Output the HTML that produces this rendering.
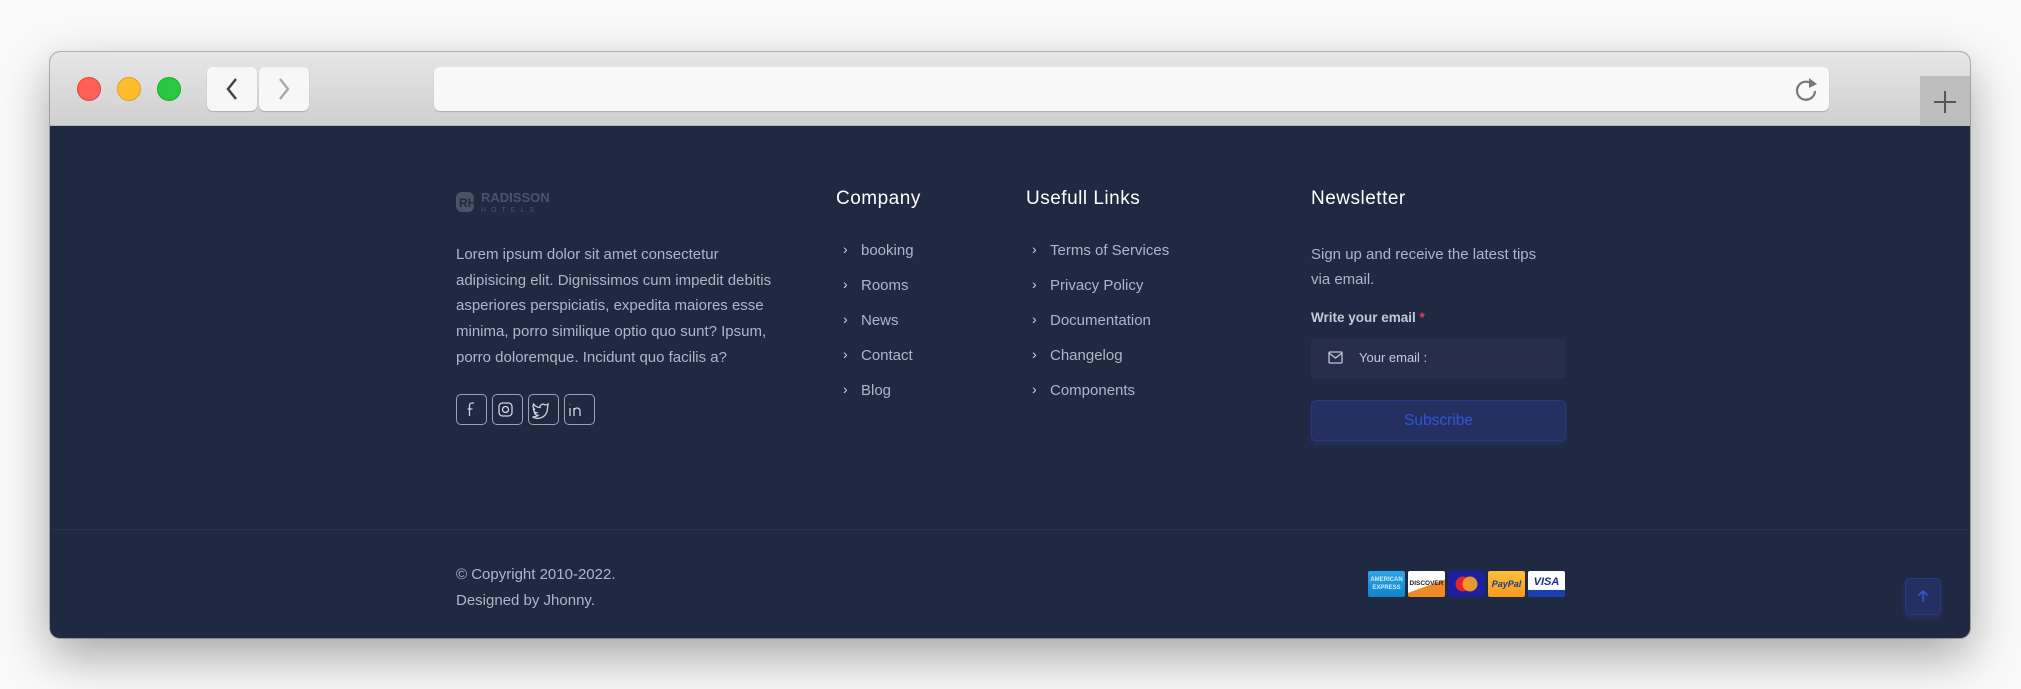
<!DOCTYPE html>
<html><head><meta charset="utf-8"><style>
*{margin:0;padding:0;box-sizing:border-box}
body{width:2021px;height:689px;background:#fafafa;position:relative;overflow:hidden;font-family:"Liberation Sans",sans-serif}
.win{position:absolute;left:50px;top:52px;width:1920px;height:586px;border-radius:10px;overflow:hidden;background:#202942;box-shadow:0 18px 50px rgba(0,0,0,.35),0 0 0 1px rgba(0,0,0,.25)}
.bar{position:absolute;left:0;top:0;width:1920px;height:74px;background:linear-gradient(#e6e6e6,#d0d0d0);border-bottom:1px solid #b5b5b5}
.dot{position:absolute;top:77px;width:24px;height:24px;border-radius:50%}
.nb{position:absolute;top:67px;width:50px;height:44px;background:#f7f7f7;border-radius:6px;box-shadow:0 1px 1px rgba(0,0,0,.2)}
.abs{position:absolute}
.t{position:absolute;color:#aeb6c6;font-size:15px;white-space:nowrap}
h4{position:absolute;color:#fff;font-weight:normal;font-size:19px;letter-spacing:.5px}
.li{position:absolute;color:#aeb6c6;font-size:15px}
.li b{position:absolute;left:-18px;top:-1px;font-weight:normal;font-size:14px;color:#cfd5df}
.so{position:absolute;top:394px;width:31px;height:31px;border:1px solid #9aa3b3;border-radius:5px}
.card{position:absolute;top:571px;width:37px;height:26px;border-radius:2px;font-size:9px;font-weight:bold;text-align:center;line-height:26px}
</style></head><body>
<div class="win"></div>
<div class="abs" style="left:50px;top:52px;width:1920px;height:74px;border-radius:10px 10px 0 0;overflow:hidden">
<div class="bar"></div>
<div class="abs" style="left:1870px;top:24px;width:50px;height:50px;background:#bdbdbd"></div>
</div>
<div class="dot" style="left:77px;background:#fe5f57;border:1px solid #e0443e"></div>
<div class="dot" style="left:117px;background:#febc2e;border:1px solid #dea123"></div>
<div class="dot" style="left:157px;background:#28c840;border:1px solid #1aab29"></div>
<div class="nb" style="left:207px"></div><div class="nb" style="left:259px"></div>
<svg class="abs" style="left:207px;top:67px" width="102" height="44"><path d="M29 12 L21 22 L29 32" stroke="#444" stroke-width="2.5" fill="none"/><path d="M73 12 L81 22 L73 32" stroke="#aaa" stroke-width="2.5" fill="none"/></svg>
<div class="abs" style="left:434px;top:67px;width:1395px;height:44px;background:#f8f8f8;border-radius:6px;box-shadow:0 1px 1px rgba(0,0,0,.2)"></div>
<svg class="abs" style="left:1792px;top:74px" width="28" height="30"><path d="M20 10 A9 9 0 1 0 23 17" stroke="#777" stroke-width="2.2" fill="none"/><path d="M17 4 L25 10 L17 14 Z" fill="#777"/></svg>
<svg class="abs" style="left:1932px;top:89px" width="26" height="26"><path d="M13 2V24M2 13H24" stroke="#555" stroke-width="2"/></svg>

<svg class="abs" style="left:456px;top:190px" width="104" height="24"><rect x="0" y="2" width="18" height="20" rx="6" fill="#4b5366"/><text x="3" y="17" font-size="12" font-weight="bold" fill="#202942" font-family="Liberation Sans">RH</text><text x="25" y="12" font-size="13" font-weight="bold" fill="#4b5366" font-family="Liberation Sans">RADISSON</text><text x="25" y="22" font-size="7" fill="#4b5366" letter-spacing="5" font-family="Liberation Sans">HOTELS</text></svg>
<div class="t" style="left:456px;top:242px;line-height:25.7px">Lorem ipsum dolor sit amet consectetur<br>adipisicing elit. Dignissimos cum impedit debitis<br>asperiores perspiciatis, expedita maiores esse<br>minima, porro similique optio quo sunt? Ipsum,<br>porro doloremque. Incidunt quo facilis a?</div>
<div class="so" style="left:456px"></div><div class="so" style="left:492px"></div><div class="so" style="left:528px"></div><div class="so" style="left:564px"></div>
<svg class="abs" style="left:456px;top:394px" width="140" height="31" fill="none" stroke="#cfd5df" stroke-width="1.3">
<path d="M18 9h-2a2.5 2.5 0 0 0-2.5 2.5V22M11.5 15h5"/>
<rect x="43" y="9" width="13" height="13" rx="3.5"/><circle cx="49.5" cy="15.5" r="3"/>
<path d="M92 10c-1 .6-2 .9-3 1a3 3 0 0 0-5 2.5C81 13.4 79 12 77.5 10c-1 2-.5 4.5 1.5 5.5-.6 0-1.2-.2-1.5-.4 0 2 1.5 3.3 3 3.7-.7.2-1.3.2-2 .1.5 1.4 2 2.5 3.5 2.5-1.6 1.2-3.6 1.7-5.5 1.5 7 4 15-.5 15-9z"/>
<path d="M114 14v8M114 10.5v.5M118 22v-8M118 17a3 3 0 0 1 6 0v5"/></svg>

<h4 style="left:836px;top:188px">Company</h4>
<div class="li" style="left:861px;top:242px"><b>›</b>booking</div>
<div class="li" style="left:861px;top:277px"><b>›</b>Rooms</div>
<div class="li" style="left:861px;top:312px"><b>›</b>News</div>
<div class="li" style="left:861px;top:347px"><b>›</b>Contact</div>
<div class="li" style="left:861px;top:382px"><b>›</b>Blog</div>

<h4 style="left:1026px;top:188px">Usefull Links</h4>
<div class="li" style="left:1050px;top:242px"><b>›</b>Terms of Services</div>
<div class="li" style="left:1050px;top:277px"><b>›</b>Privacy Policy</div>
<div class="li" style="left:1050px;top:312px"><b>›</b>Documentation</div>
<div class="li" style="left:1050px;top:347px"><b>›</b>Changelog</div>
<div class="li" style="left:1050px;top:382px"><b>›</b>Components</div>

<h4 style="left:1311px;top:188px">Newsletter</h4>
<div class="t" style="left:1311px;top:242px;line-height:25px">Sign up and receive the latest tips<br>via email.</div>
<div class="t" style="left:1311px;top:310px;font-size:13.5px;font-weight:bold;color:#c5cbd6">Write your email <span style="color:#e43f52">*</span></div>
<div class="abs" style="left:1311px;top:338px;width:255px;height:41px;background:#262e4c;border-radius:5px"></div>
<svg class="abs" style="left:1328px;top:351px" width="16" height="14" fill="none" stroke="#bfc6d2" stroke-width="1.3"><rect x="1" y="1" width="13" height="11" rx="1"/><path d="M1 2l6.5 5 6.5-5"/></svg>
<div class="t" style="left:1359px;top:350px;font-size:13px;color:#c5cbd6">Your email :</div>
<div class="abs" style="left:1311px;top:400px;width:255px;height:41px;background:#243062;border:1px solid #2b3a7a;border-radius:5px;box-shadow:0 3px 6px rgba(47,85,212,.25);color:#2f55d4;font-size:15.5px;text-align:center;line-height:39px">Subscribe</div>

<div class="abs" style="left:50px;top:529px;width:1920px;height:1px;background:#283152"></div>
<div class="t" style="left:456px;top:562px;line-height:26px">© Copyright 2010-2022.<br>Designed by Jhonny.</div>

<div class="card" style="left:1368px;background:linear-gradient(#2aa6e8,#1283c9);color:#cfeaff;font-size:6px;line-height:8px;padding-top:5px">AMERICAN<br>EXPRESS</div>
<div class="card" style="left:1408px;background:linear-gradient(160deg,#fff 55%,#f08a24 56%);color:#222;font-size:6.5px">DISCOVER</div>
<div class="card" style="left:1448px;background:#1b1fa0"><svg width="37" height="26"><circle cx="15" cy="13" r="7.5" fill="#e8242b"/><circle cx="22" cy="13" r="7.5" fill="#f5a623" opacity=".9"/></svg></div>
<div class="card" style="left:1488px;background:linear-gradient(#ffbf3a,#f59a1b);color:#1a3e8c;font-style:italic;font-size:9px">PayPal</div>
<div class="card" style="left:1528px;background:linear-gradient(#fff 72%,#1a3fb0 73%);color:#1a2f8a;font-size:11px;line-height:22px;font-style:italic">VISA</div>

<div class="abs" style="left:1905px;top:578px;width:36px;height:37px;background:#243062;border:1px solid #2b3a7a;border-radius:5px;box-shadow:0 3px 6px rgba(47,85,212,.25)"></div>
<svg class="abs" style="left:1915px;top:588px" width="16" height="16" fill="none" stroke="#3a5ce0" stroke-width="1.4"><path d="M8 14V3M3.5 7.5L8 3l4.5 4.5"/></svg>
</body></html>
